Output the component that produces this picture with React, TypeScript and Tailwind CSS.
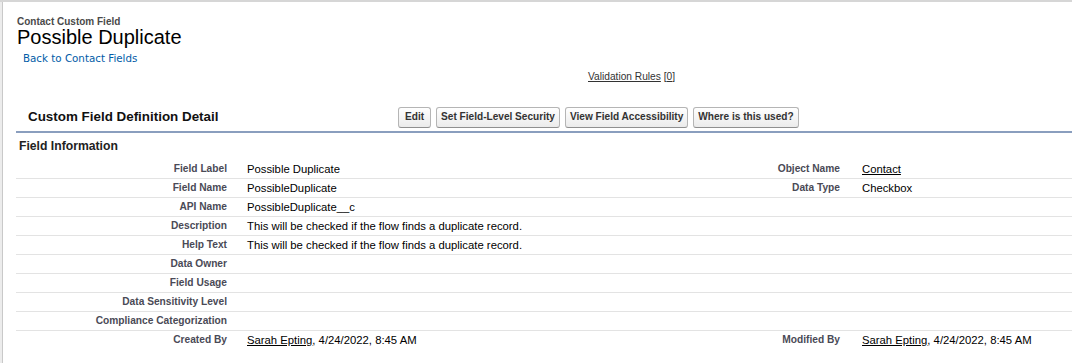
import React from "react";

const desc = "This will be checked if the flow finds a duplicate record.";

type Row = { l: string; v?: React.ReactNode; l2?: string; v2?: React.ReactNode; last?: boolean };

const sarah = (
  <>
    <span className="underline">Sarah Epting</span>, 4/24/2022, 8:45 AM
  </>
);

const rows: Row[] = [
  { l: "Field Label", v: "Possible Duplicate", l2: "Object Name", v2: <span className="underline">Contact</span> },
  { l: "Field Name", v: "PossibleDuplicate", l2: "Data Type", v2: "Checkbox" },
  { l: "API Name", v: "PossibleDuplicate__c" },
  { l: "Description", v: desc },
  { l: "Help Text", v: desc },
  { l: "Data Owner" },
  { l: "Field Usage" },
  { l: "Data Sensitivity Level" },
  { l: "Compliance Categorization" },
  { l: "Created By", v: sarah, l2: "Modified By", v2: sarah, last: true },
];

function Btn({ children, wide }: { children: React.ReactNode; wide?: boolean }) {
  return (
    <div
      className={`h-[21px] flex items-center rounded-[3px] border border-[#b5b5b5] border-b-[#8f8f8f] bg-gradient-to-b from-white to-[#ebebeb] text-[10.1px] font-bold text-[#333] leading-none ${
        wide ? "px-[6px]" : "px-[4px]"
      }`}
    >
      {children}
    </div>
  );
}

export default function App() {
  return (
    <div
      className="w-[1072px] h-[363px] overflow-hidden bg-white flex flex-col"
      style={{ fontFamily: '"Liberation Sans", Arial, sans-serif' }}
    >
      <div className="h-[2px] bg-[#d6d6d6] shrink-0" />
      <div className="flex flex-1">
        <div className="w-[2px] bg-[#ececec]" />
        <div className="w-[1px] bg-[#c9c9c9]" />
        <div className="flex-1 flex flex-col pl-[13px]">
          <div className="mt-[14px] h-[12px] leading-[12px] text-[10px] font-bold text-[#4a4a4a] pl-[1px]">
            Contact Custom Field
          </div>
          <div className="h-[18px] leading-[18px] text-[20px] text-black pl-[1px]">Possible Duplicate</div>
          <div
            className="mt-[6px] h-[12px] leading-[12px] text-[10.3px] text-[#015ba7] pl-[7px]"
            style={{ fontFamily: '"DejaVu Sans", Verdana, sans-serif' }}
          >
            Back to Contact Fields
          </div>
          <div className="mt-[7px] h-[12px] leading-[12px] text-[10.2px] text-[#333] pl-[572px]">
            <span className="underline">Validation Rules</span> [<span className="underline">0</span>]
          </div>
          <div className="mt-[20px] h-[30px] flex items-center border-b-2 border-[#8a9ebe]">
            <div className="w-[382px] pl-[12px] text-[13.4px] font-bold text-[#111]">Custom Field Definition Detail</div>
            <div className="flex gap-[5px]">
              <Btn wide>Edit</Btn>
              <Btn>Set Field-Level Security</Btn>
              <Btn>View Field Accessibility</Btn>
              <Btn>Where is this used?</Btn>
            </div>
          </div>
          <div className="h-[27px] flex items-center pl-[3px] text-[12.2px] font-bold text-[#222]">Field Information</div>
          <div className="flex flex-col">
            {rows.map((r, i) => (
              <div
                key={i}
                className={`grid grid-cols-[221px_415px_200px_1fr] items-center ${
                  r.last ? "h-[18px]" : "h-[19px] border-b border-[#e3e3e3]"
                }`}
              >
                <div className="pr-[10px] text-right text-[10.2px] font-bold text-[#4a4a56] whitespace-nowrap">{r.l}</div>
                <div className="pl-[10px] text-[11.3px] text-black whitespace-nowrap">{r.v}</div>
                <div className="pr-[12px] text-right text-[10.2px] font-bold text-[#4a4a56] whitespace-nowrap">{r.l2}</div>
                <div className="pl-[10px] text-[11.3px] text-black whitespace-nowrap">{r.v2}</div>
              </div>
            ))}
          </div>
        </div>
      </div>
    </div>
  );
}
